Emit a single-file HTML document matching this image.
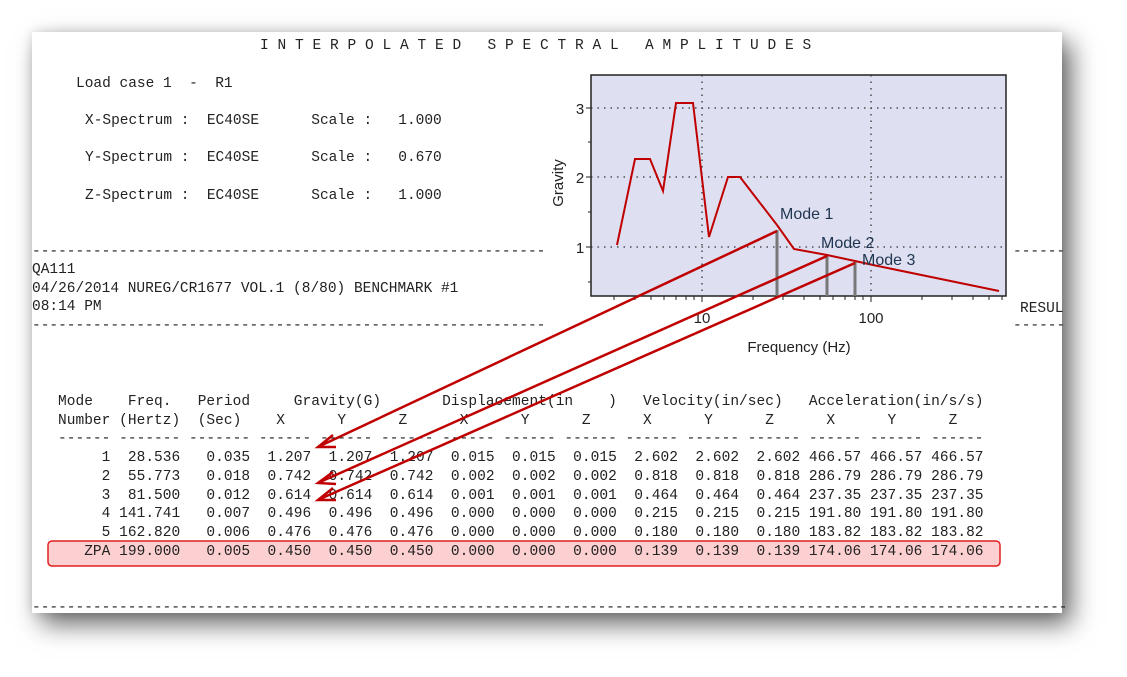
<!DOCTYPE html>
<html><head><style>
body{margin:0;width:1127px;height:677px;background:#fff;position:relative;overflow:hidden}
#pg{position:absolute;left:32px;top:32px;width:1030px;height:581px;background:#fff;box-shadow:9px 11px 24px rgba(0,0,0,.6),0 0 10px rgba(0,0,0,.12)}
.t{position:absolute;font-family:"Liberation Mono",monospace;font-size:14.5px;white-space:pre;color:#222;line-height:18.7px;margin:0}
svg{position:absolute;left:0;top:0}
</style></head><body>
<div id="pg"></div>
<svg width="1127" height="677">
<rect x="48" y="541" width="952" height="25" rx="4" fill="#fcd0d0" stroke="#e02020" stroke-width="1.5"/>
</svg>
<div class="t" style="left:260px;top:37px;letter-spacing:8.8px">INTERPOLATED SPECTRAL AMPLITUDES</div>
<div class="t" style="left:76px;top:75px">Load case 1  -  R1</div>
<div class="t" style="left:85px;top:112px">X-Spectrum :  EC40SE      Scale :   1.000</div>
<div class="t" style="left:85px;top:149px">Y-Spectrum :  EC40SE      Scale :   0.670</div>
<div class="t" style="left:85px;top:187px">Z-Spectrum :  EC40SE      Scale :   1.000</div>
<div class="t" style="left:32px;top:243px">------------------------------------------------------------------</div>
<div class="t" style="left:32px;top:261px">QA111
04/26/2014 NUREG/CR1677 VOL.1 (8/80) BENCHMARK #1
08:14 PM</div>
<div class="t" style="left:32px;top:317px">------------------------------------------------------------------</div>
<div class="t" style="left:1013px;top:243px">------</div>
<div class="t" style="left:1020px;top:300px">RESUL</div>
<div class="t" style="left:1013px;top:317px">------</div>
<div class="t" style="left:58px;top:393px;letter-spacing:0.03px">Mode    Freq.   Period     Gravity(G)       Displacement(in    )   Velocity(in/sec)   Acceleration(in/s/s)
Number (Hertz)  (Sec)    X      Y      Z      X      Y      Z      X      Y      Z      X      Y      Z
------ ------- ------- ------ ------ ------ ------ ------ ------ ------ ------ ------ ------ ------ ------
     1  28.536   0.035  1.207  1.207  1.207  0.015  0.015  0.015  2.602  2.602  2.602 466.57 466.57 466.57
     2  55.773   0.018  0.742  0.742  0.742  0.002  0.002  0.002  0.818  0.818  0.818 286.79 286.79 286.79
     3  81.500   0.012  0.614  0.614  0.614  0.001  0.001  0.001  0.464  0.464  0.464 237.35 237.35 237.35
     4 141.741   0.007  0.496  0.496  0.496  0.000  0.000  0.000  0.215  0.215  0.215 191.80 191.80 191.80
     5 162.820   0.006  0.476  0.476  0.476  0.000  0.000  0.000  0.180  0.180  0.180 183.82 183.82 183.82
   ZPA 199.000   0.005  0.450  0.450  0.450  0.000  0.000  0.000  0.139  0.139  0.139 174.06 174.06 174.06</div>
<div class="t" style="left:32px;top:599px">-----------------------------------------------------------------------------------------------------------------------</div>
<svg width="1127" height="677">
<rect x="545" y="62" width="465" height="300" fill="#fff"/>
<rect x="591" y="75" width="415" height="221" fill="#dedff0" stroke="#222" stroke-width="1.5"/>
<g stroke="#333" stroke-width="1.3" stroke-dasharray="1.5,5">
<line x1="591" y1="108" x2="1006" y2="108"/><line x1="591" y1="177" x2="1006" y2="177"/><line x1="591" y1="247" x2="1006" y2="247"/>
<line x1="702" y1="75" x2="702" y2="296"/><line x1="871" y1="75" x2="871" y2="296"/>
</g>
<g stroke="#222" stroke-width="1">
<line x1="586" y1="108" x2="591" y2="108"/><line x1="586" y1="177" x2="591" y2="177"/><line x1="586" y1="247" x2="591" y2="247"/>
<line x1="588" y1="142" x2="591" y2="142"/><line x1="588" y1="212" x2="591" y2="212"/><line x1="588" y1="282" x2="591" y2="282"/>
<line x1="614" y1="296" x2="614" y2="300"/><line x1="635" y1="296" x2="635" y2="300"/><line x1="651" y1="296" x2="651" y2="300"/><line x1="664" y1="296" x2="664" y2="300"/><line x1="676" y1="296" x2="676" y2="300"/><line x1="686" y1="296" x2="686" y2="300"/><line x1="694" y1="296" x2="694" y2="300"/><line x1="702" y1="296" x2="702" y2="302"/>
<line x1="753" y1="296" x2="753" y2="300"/><line x1="783" y1="296" x2="783" y2="300"/><line x1="804" y1="296" x2="804" y2="300"/><line x1="820" y1="296" x2="820" y2="300"/><line x1="833" y1="296" x2="833" y2="300"/><line x1="845" y1="296" x2="845" y2="300"/><line x1="855" y1="296" x2="855" y2="300"/><line x1="863" y1="296" x2="863" y2="300"/><line x1="871" y1="296" x2="871" y2="302"/>
<line x1="922" y1="296" x2="922" y2="300"/><line x1="952" y1="296" x2="952" y2="300"/><line x1="973" y1="296" x2="973" y2="300"/><line x1="989" y1="296" x2="989" y2="300"/><line x1="1002" y1="296" x2="1002" y2="300"/>
</g>
<g font-family="Liberation Sans,sans-serif" font-size="15" fill="#222">
<text x="580" y="114" text-anchor="middle">3</text><text x="580" y="183" text-anchor="middle">2</text><text x="580" y="253" text-anchor="middle">1</text>
<text x="702" y="323" text-anchor="middle">10</text><text x="871" y="323" text-anchor="middle">100</text>
<text x="799" y="352" text-anchor="middle">Frequency (Hz)</text>
<text transform="translate(563,183) rotate(-90)" text-anchor="middle">Gravity</text>
</g>
<g stroke="#777" stroke-width="3"><line x1="777" y1="230" x2="777" y2="296"/><line x1="827" y1="255" x2="827" y2="296"/><line x1="855" y1="262" x2="855" y2="296"/></g>
<polyline fill="none" stroke="#c00000" stroke-width="2" points="617,245 635,159 650,159 663,191 676,103 693,103 709,237 728,177 740,177 777,225 794,249 827,255 855,261 873,265 999,291"/>
<g font-family="Liberation Sans,sans-serif" font-size="16" fill="#1f3550">
<text x="780" y="219">Mode 1</text><text x="821" y="248">Mode 2</text><text x="862" y="265">Mode 3</text>
</g>
<g stroke="#c00000" stroke-width="2.5" fill="none">
<line x1="777" y1="231" x2="320" y2="446"/><polyline points="333,435 318,447 336,447"/>
<line x1="827" y1="256" x2="320" y2="482"/><polyline points="333,472 318,483 336,484"/>
<line x1="855" y1="263" x2="320" y2="499"/><polyline points="333,488 318,500 336,500"/>
</g>
</svg>
</body></html>
